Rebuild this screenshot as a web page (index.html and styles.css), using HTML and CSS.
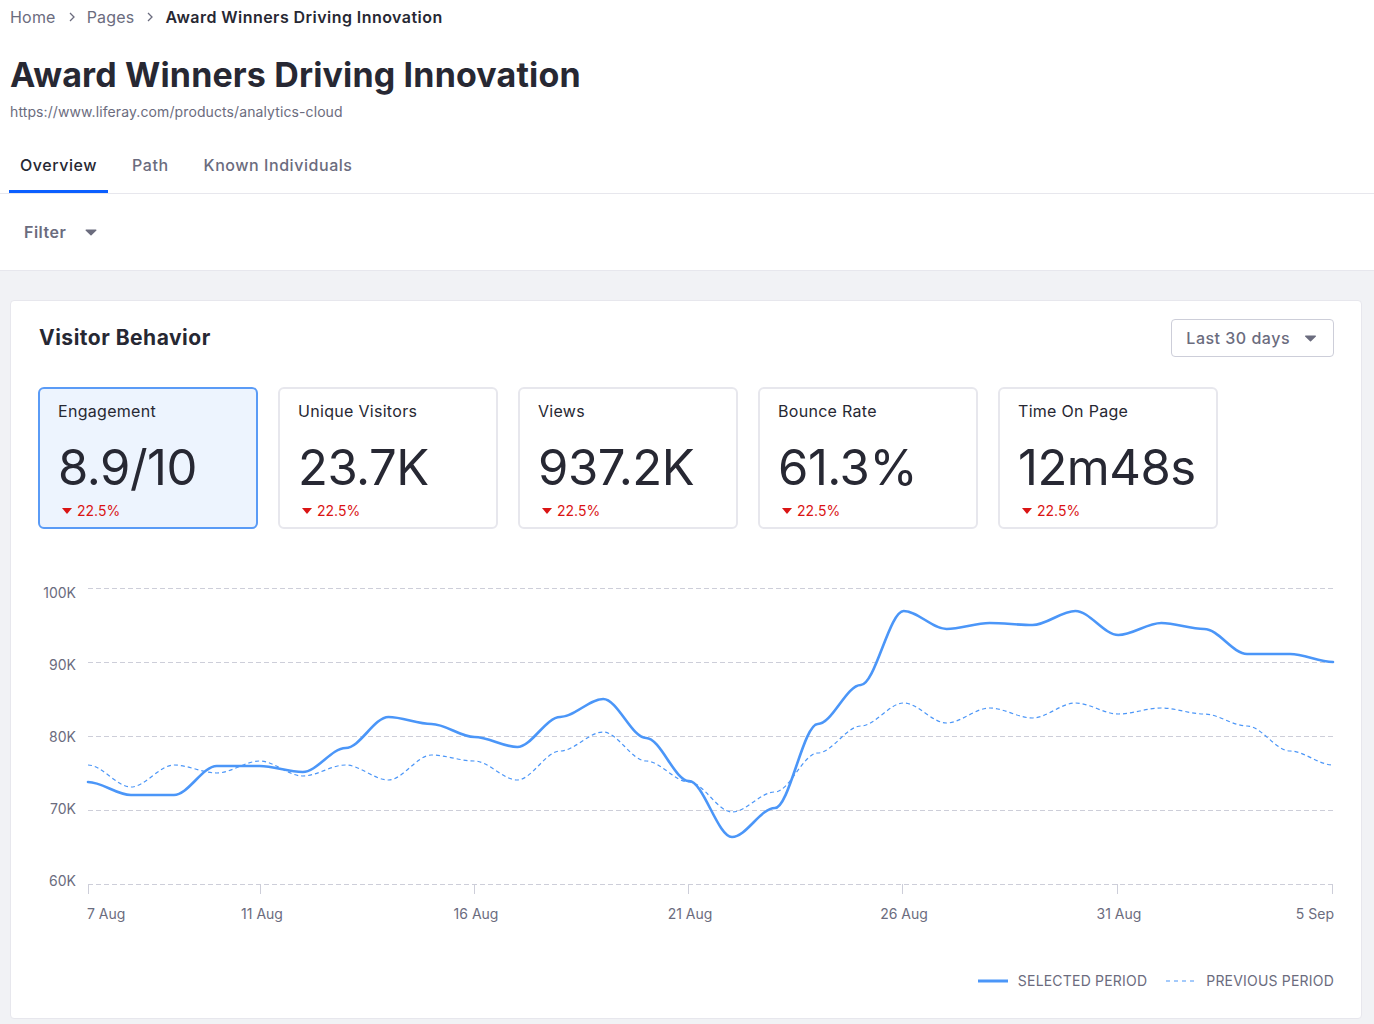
FILE: index.html
```html
<!DOCTYPE html>
<html lang="en">
<head>
<meta charset="utf-8">
<title>Award Winners Driving Innovation</title>
<link rel="stylesheet" href="styles.css">
</head>
<body>
<header class="page-header">
  <nav class="breadcrumb">
    <span class="crumb">Home</span>
    <svg class="crumb-sep" viewBox="0 0 6 10"><polyline points="1,1 5,5 1,9" /></svg>
    <span class="crumb">Pages</span>
    <svg class="crumb-sep" viewBox="0 0 6 10"><polyline points="1,1 5,5 1,9" /></svg>
    <span class="crumb current">Award Winners Driving Innovation</span>
  </nav>
  <h1 class="title">Award Winners Driving Innovation</h1>
  <div class="url">https://www.liferay.com/products/analytics-cloud</div>
  <nav class="tabs">
    <span class="tab active">Overview</span>
    <span class="tab">Path</span>
    <span class="tab">Known Individuals</span>
  </nav>
  <div class="filter-bar">
    <span class="filter">Filter
      <svg class="caret" viewBox="0 0 12 7"><path d="M1 0.5 H11 a0.6 0.6 0 0 1 0.4 1 L6.5 6.2 a0.7 0.7 0 0 1 -1 0 L0.6 1.5 A0.6 0.6 0 0 1 1 0.5Z" /></svg>
    </span>
  </div>
</header>

<main class="content">
  <section class="card">
    <div class="card-header">
      <h2 class="card-title">Visitor Behavior</h2>
      <span class="range">Last 30 days
        <svg class="caret" viewBox="0 0 12 7"><path d="M1 0.5 H11 a0.6 0.6 0 0 1 0.4 1 L6.5 6.2 a0.7 0.7 0 0 1 -1 0 L0.6 1.5 A0.6 0.6 0 0 1 1 0.5Z" /></svg>
      </span>
    </div>

    <div class="metrics">
      <div class="metric selected">
        <div class="metric-label">Engagement</div>
        <div class="metric-value">8.9/10</div>
        <div class="metric-delta"><span class="down"></span>22.5%</div>
      </div>
      <div class="metric">
        <div class="metric-label">Unique Visitors</div>
        <div class="metric-value">23.7K</div>
        <div class="metric-delta"><span class="down"></span>22.5%</div>
      </div>
      <div class="metric">
        <div class="metric-label">Views</div>
        <div class="metric-value">937.2K</div>
        <div class="metric-delta"><span class="down"></span>22.5%</div>
      </div>
      <div class="metric">
        <div class="metric-label">Bounce Rate</div>
        <div class="metric-value">61.3%</div>
        <div class="metric-delta"><span class="down"></span>22.5%</div>
      </div>
      <div class="metric">
        <div class="metric-label">Time On Page</div>
        <div class="metric-value">12m48s</div>
        <div class="metric-delta"><span class="down"></span>22.5%</div>
      </div>
    </div>

    <svg class="chart" width="1350" height="380" viewBox="11 560 1350 380">
      <g class="grid">
        <line x1="88" y1="588.5" x2="1333" y2="588.5" />
        <line x1="88" y1="662.5" x2="1333" y2="662.5" />
        <line x1="88" y1="736.5" x2="1333" y2="736.5" />
        <line x1="88" y1="810.5" x2="1333" y2="810.5" />
        <line x1="88" y1="884.5" x2="1333" y2="884.5" />
      </g>
      <g class="ticks">
        <line x1="88.5" y1="884" x2="88.5" y2="894" />
        <line x1="260.5" y1="884" x2="260.5" y2="894" />
        <line x1="474.5" y1="884" x2="474.5" y2="894" />
        <line x1="688.5" y1="884" x2="688.5" y2="894" />
        <line x1="902.5" y1="884" x2="902.5" y2="894" />
        <line x1="1117.5" y1="884" x2="1117.5" y2="894" />
        <line x1="1332.5" y1="884" x2="1332.5" y2="894" />
      </g>
      <g class="ylabels">
        <text x="76" y="597.5">100K</text>
        <text x="76" y="669.5">90K</text>
        <text x="76" y="741.5">80K</text>
        <text x="76" y="813.5">70K</text>
        <text x="76" y="885.5">60K</text>
      </g>
      <g class="xlabels">
        <text x="87" y="919" class="start">7 Aug</text>
        <text x="262" y="919">11 Aug</text>
        <text x="476" y="919">16 Aug</text>
        <text x="690" y="919">21 Aug</text>
        <text x="904" y="919">26 Aug</text>
        <text x="1119" y="919">31 Aug</text>
        <text x="1334" y="919" class="end">5 Sep</text>
      </g>
      <path class="line-prev" d="M88,765 C102.3,765 116.6,787 130.9,787 S159.6,765 173.9,765 S202.5,773 216.8,773 S245.4,761 259.7,761 S288.3,776 302.7,776 S331.3,765 345.6,765 S374.2,780 388.5,780 S417.1,755 431.5,755 S460.1,761 474.4,761 S503,780 517.3,780 S545.9,751 560.2,751 S588.9,732 603.2,732 S631.8,761 646.1,761 S674.7,782 689,782 S717.7,812 732,812 S760.6,792 774.9,792 S803.5,753 817.8,753 S846.5,726 860.8,726 S889.4,703 903.7,703 S932.3,723 946.6,723 S975.2,708 989.6,708 S1018.2,718 1032.5,718 S1061.1,703 1075.4,703 S1104,714 1118.3,714 S1147,708 1161.3,708 S1189.9,714 1204.2,714 S1232.8,726 1247.1,726 S1275.8,751 1290.1,751 S1318.7,765 1333,765" />
      <path class="line-sel" d="M88,782 C102.3,782 116.6,795 130.9,795 S159.6,795 173.9,795 S202.5,766 216.8,766 S245.4,766 259.7,766 S288.3,772 302.7,772 S331.3,748 345.6,748 S374.2,717 388.5,717 S417.1,724 431.5,724 S460.1,737 474.4,737 S503,747 517.3,747 S545.9,717 560.2,717 S588.9,699 603.2,699 S631.8,738 646.1,738 S674.7,781 689,781 S717.7,837 732,837 S760.6,808 774.9,808 S803.5,724 817.8,724 S846.5,685 860.8,685 S889.4,611 903.7,611 S932.3,629 946.6,629 S975.2,623 989.6,623 S1018.2,625 1032.5,625 S1061.1,611 1075.4,611 S1104,635 1118.3,635 S1147,623 1161.3,623 S1189.9,629 1204.2,629 S1232.8,654 1247.1,654 S1275.8,654 1290.1,654 S1318.7,662 1333,662" />
    </svg>

    <div class="legend">
      <span class="legend-item">
        <svg class="swatch" viewBox="0 0 30 4"><line x1="0" y1="2" x2="30" y2="2" class="sw-sel" /></svg>
        SELECTED PERIOD
      </span>
      <span class="legend-item">
        <svg class="swatch" viewBox="0 0 30 4"><line x1="0" y1="2" x2="30" y2="2" class="sw-prev" /></svg>
        PREVIOUS PERIOD
      </span>
    </div>
  </section>
</main>
</body>
</html>
```

FILE: styles.css
```css
* { box-sizing: border-box; }

html, body {
  margin: 0;
  padding: 0;
}

body {
  font-family: Inter, "Liberation Sans", sans-serif;
  color: #272833;
  background: #f1f2f5;
}

/* ---------- page header ---------- */
.page-header {
  background: #fff;
  border-bottom: 1px solid #e7e7ed;
  padding: 5px 10px 0;
}

.breadcrumb {
  display: flex;
  align-items: center;
  height: 24px;
  font-size: 16px;
  line-height: 24px;
  color: #6b6c7e;
  letter-spacing: 0.2px;
}

.crumb-sep {
  width: 6px;
  height: 10px;
  margin: 0 12px 0 13px;
  fill: none;
  stroke: #6b6c7e;
  stroke-width: 1.3;
}

.crumb.current {
  color: #272833;
  font-weight: 600;
  letter-spacing: 0.45px;
}

.title {
  margin: 24px 0 0;
  font-size: 34px;
  line-height: 44px;
  font-weight: 700;
  letter-spacing: 0.15px;
}

.url {
  margin-top: 5px;
  font-size: 14px;
  line-height: 20px;
  color: #6b6c7e;
  letter-spacing: 0.1px;
}

.tabs {
  display: flex;
  margin: 19px -10px 0;
  padding-left: 9px;
  border-bottom: 1px solid #e7e7ed;
}

.tab {
  padding: 12px 11px 16px;
  margin-right: 13px;
  font-size: 16px;
  line-height: 24px;
  font-weight: 500;
  color: #6b6c7e;
  letter-spacing: 0.55px;
}

.tab.active {
  color: #272833;
  box-shadow: inset 0 -3px 0 #0b5fff;
}

.filter-bar {
  padding: 26px 0 26px 14px;
}

.filter {
  display: inline-flex;
  align-items: center;
  font-size: 16px;
  line-height: 24px;
  font-weight: 600;
  color: #6b6c7e;
  letter-spacing: 0.5px;
}

.caret {
  width: 12px;
  height: 7px;
  fill: #6b6c7e;
}

.filter .caret {
  margin-left: 19px;
}

/* ---------- content ---------- */
.content {
  padding: 29px 12px 5px 10px;
}

.card {
  background: #fff;
  border: 1px solid #e7e7ed;
  border-radius: 4px;
  padding: 0 0 27px;
}

.card-header {
  display: flex;
  justify-content: space-between;
  align-items: center;
  padding: 18px 27px 0 27px;
}

.card-title {
  margin: 0 0 0 1px;
  font-size: 21px;
  line-height: 28px;
  font-weight: 700;
  letter-spacing: 0.5px;
}

.range {
  display: inline-flex;
  align-items: center;
  height: 38px;
  padding: 0 16px 0 14px;
  border: 1px solid #cdced9;
  border-radius: 4px;
  font-size: 16px;
  font-weight: 500;
  color: #6b6c7e;
  letter-spacing: 0.5px;
}

.range .caret {
  width: 13px;
  margin-left: 14px;
}

.metrics {
  display: flex;
  gap: 20px;
  padding: 0 27px;
  margin-top: 30px;
}

.metric {
  width: 220px;
  height: 142px;
  border: 2px solid #e7e7ed;
  border-radius: 6px;
  padding: 10px 18px 6px;
  background: #fff;
}

.metric.selected {
  border-color: #5a9bf6;
  background: #edf4fe;
}

.metric-label {
  font-size: 16px;
  line-height: 24px;
  color: #272833;
  letter-spacing: 0.3px;
}

.metric-value {
  margin-top: 17px;
  font-size: 49px;
  line-height: 56px;
  font-weight: 400;
  letter-spacing: -0.5px;
  color: #272833;
  white-space: nowrap;
}

.metric-delta {
  display: flex;
  align-items: center;
  margin-top: 5px;
  font-size: 14px;
  line-height: 20px;
  color: #da1414;
}

.down {
  width: 0;
  height: 0;
  margin: 0 5px 0 4px;
  border-left: 5px solid transparent;
  border-right: 5px solid transparent;
  border-top: 6px solid #da1414;
}

/* ---------- chart ---------- */
.chart {
  display: block;
  margin-top: 31px;
}

.grid line {
  stroke: #cdced9;
  stroke-width: 1;
  stroke-dasharray: 5 3;
}

.ticks line {
  stroke: #cdced9;
  stroke-width: 1;
}

.ylabels text,
.xlabels text {
  font-family: Inter, "Liberation Sans", sans-serif;
  font-size: 14px;
  fill: #6b6c7e;
}

.ylabels text {
  text-anchor: end;
}

.xlabels text {
  text-anchor: middle;
}

.xlabels text.start { text-anchor: start; }
.xlabels text.end { text-anchor: end; }

.line-sel {
  fill: none;
  stroke: #4b96f8;
  stroke-width: 2.6;
  stroke-linecap: round;
}

.line-prev {
  fill: none;
  stroke: #4b96f8;
  stroke-width: 1.2;
  stroke-dasharray: 4 3;
}

.legend {
  display: flex;
  justify-content: flex-end;
  gap: 19px;
  margin-top: 31px;
  padding-right: 27px;
  font-size: 14px;
  line-height: 20px;
  color: #6b6c7e;
  letter-spacing: 0.2px;
}

.legend-item {
  display: inline-flex;
  align-items: center;
}

.swatch {
  width: 30px;
  height: 4px;
  margin-right: 10px;
}

.sw-sel {
  stroke: #4b96f8;
  stroke-width: 3;
}

.sw-prev {
  stroke: #4b96f8;
  stroke-width: 1.2;
  stroke-dasharray: 4 4;
}
```
